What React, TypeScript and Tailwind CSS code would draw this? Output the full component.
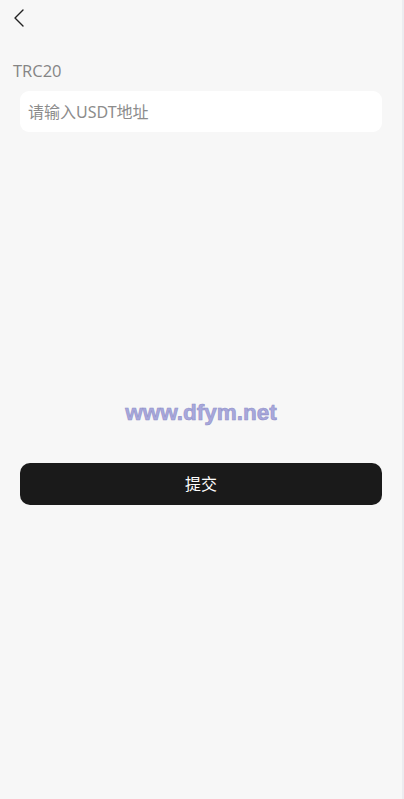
import React, { useState } from "react";

const BackIcon = () => (
  <svg width="16" height="20" viewBox="0 0 16 20" fill="none">
    <polyline
      points="10,1 2,9 10,17"
      stroke="#222"
      strokeWidth="1.4"
      strokeLinecap="round"
      strokeLinejoin="round"
    />
  </svg>
);

export default function App() {
  const [address, setAddress] = useState<string>("");

  return (
    <div
      className="flex min-h-[799px] w-full bg-[#f7f7f7]"
      style={{ fontFamily: '"Noto Sans", "Noto Sans CJK SC", sans-serif' }}
    >
      <div className="flex flex-1 flex-col">
        <div className="flex h-[44px] items-start pl-[13px] pt-[9px]">
          <button className="flex">
            <BackIcon />
          </button>
        </div>
        <div
          className="pl-[13px] pt-[16px] text-[16.5px] leading-[22px] text-[#858585]"
          style={{ fontFamily: '"Open Sans", "Noto Sans CJK SC", sans-serif' }}
        >
          TRC20
        </div>
        <div className="px-[20px] pt-[9px]">
          <input
            value={address}
            onChange={(e) => setAddress(e.target.value)}
            placeholder="请输入USDT地址"
            className="h-[41px] w-full rounded-[9px] bg-white px-[8px] text-[16px] text-[#333] outline-none placeholder:text-[#8c8c8c]"
          />
        </div>
        <div className="flex justify-center pt-[268px]">
          <span
            className="text-[22.5px] font-bold leading-[26px] text-[#a8a8dc]"
            style={{
              fontFamily: '"Liberation Sans", Arial, sans-serif',
              WebkitTextStroke: "0.6px #9090c8",
            }}
          >
            www.dfym.net
          </span>
        </div>
        <div className="px-[20px] pt-[37px]">
          <button className="flex h-[42px] w-full items-center justify-center rounded-[10px] bg-[#1a1a1a] text-[16px] text-white">
            提交
          </button>
        </div>
      </div>
      <div className="w-[2px] bg-[#ececf0]" />
    </div>
  );
}
